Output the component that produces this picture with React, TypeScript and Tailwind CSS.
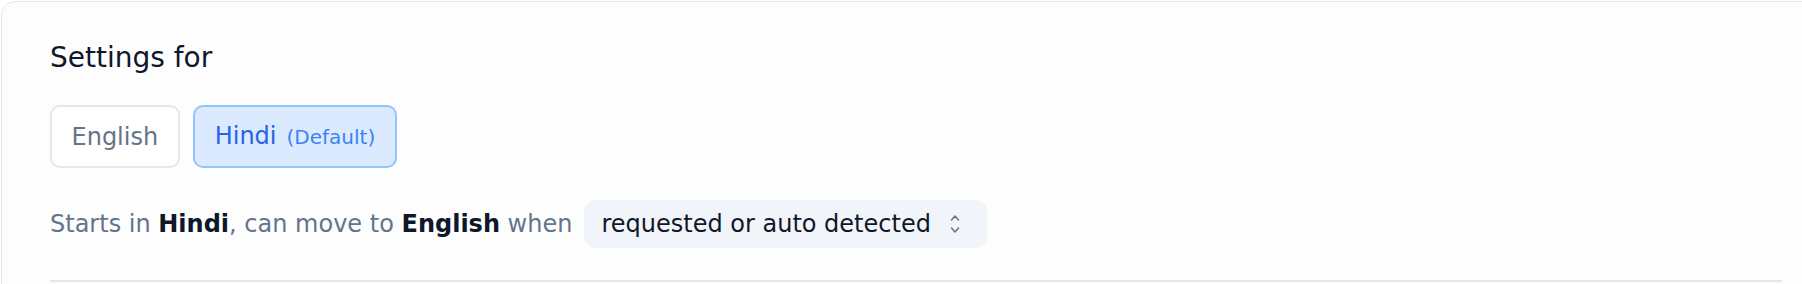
import React from "react";

function UpDownIcon() {
  return (
    <svg width="10" height="20" viewBox="0 0 10 20" fill="none" stroke="#64748b" strokeWidth="1.5" strokeLinecap="round" strokeLinejoin="round">
      <path d="M1.5 6 L5 2 L8.5 6" />
      <path d="M1.5 14 L5 18 L8.5 14" />
    </svg>
  );
}

export default function App() {
  return (
    <div
      className="w-[1802px] h-[284px] overflow-hidden bg-white"
      style={{ fontFamily: '"DejaVu Sans", "Liberation Sans", sans-serif' }}
    >
      <div className="ml-px mt-px w-[1830px] rounded-[14px] border border-[#e2e8f0] bg-[#fdfdfe] pl-12 pr-12 pt-[38px] pb-10">
        <h2 className="text-[28px] leading-[36px] font-normal text-[#0f172a]">Settings for</h2>

        <div className="mt-[29px] flex gap-[13px]">
          <button className="rounded-[10px] border-2 border-[#e2e8f0] bg-white px-[19.5px] py-[13px] text-[24px] leading-[32px] text-[#64748b]">
            English
          </button>
          <button className="flex items-baseline gap-[10px] rounded-[10px] border-2 border-[#93c5fd] bg-[#dbeafe] px-[20px] py-[13px] text-[24px] leading-[32px] text-[#2563eb]">
            <span>Hindi</span>
            <span className="text-[20px] text-[#3b82f6]">(Default)</span>
          </button>
        </div>

        <div className="mt-[32px] flex items-center">
          <p className="text-[24px] leading-[32px] text-[#64748b]">
            Starts in <span className="font-bold text-[#0f172a]">Hindi</span>, can move to{" "}
            <span className="font-bold text-[#0f172a]">English</span> when
          </p>
          <div className="ml-[12px] flex h-[48px] items-center gap-[19px] rounded-xl bg-[#f1f5f9] pl-[17px] pr-[27px] text-[24px] text-[#0f172a]">
            <span>requested or auto detected</span>
            <UpDownIcon />
          </div>
        </div>

        <div className="mt-[32px] h-[2px] w-full bg-[#e2e8f0]" />
      </div>
    </div>
  );
}
